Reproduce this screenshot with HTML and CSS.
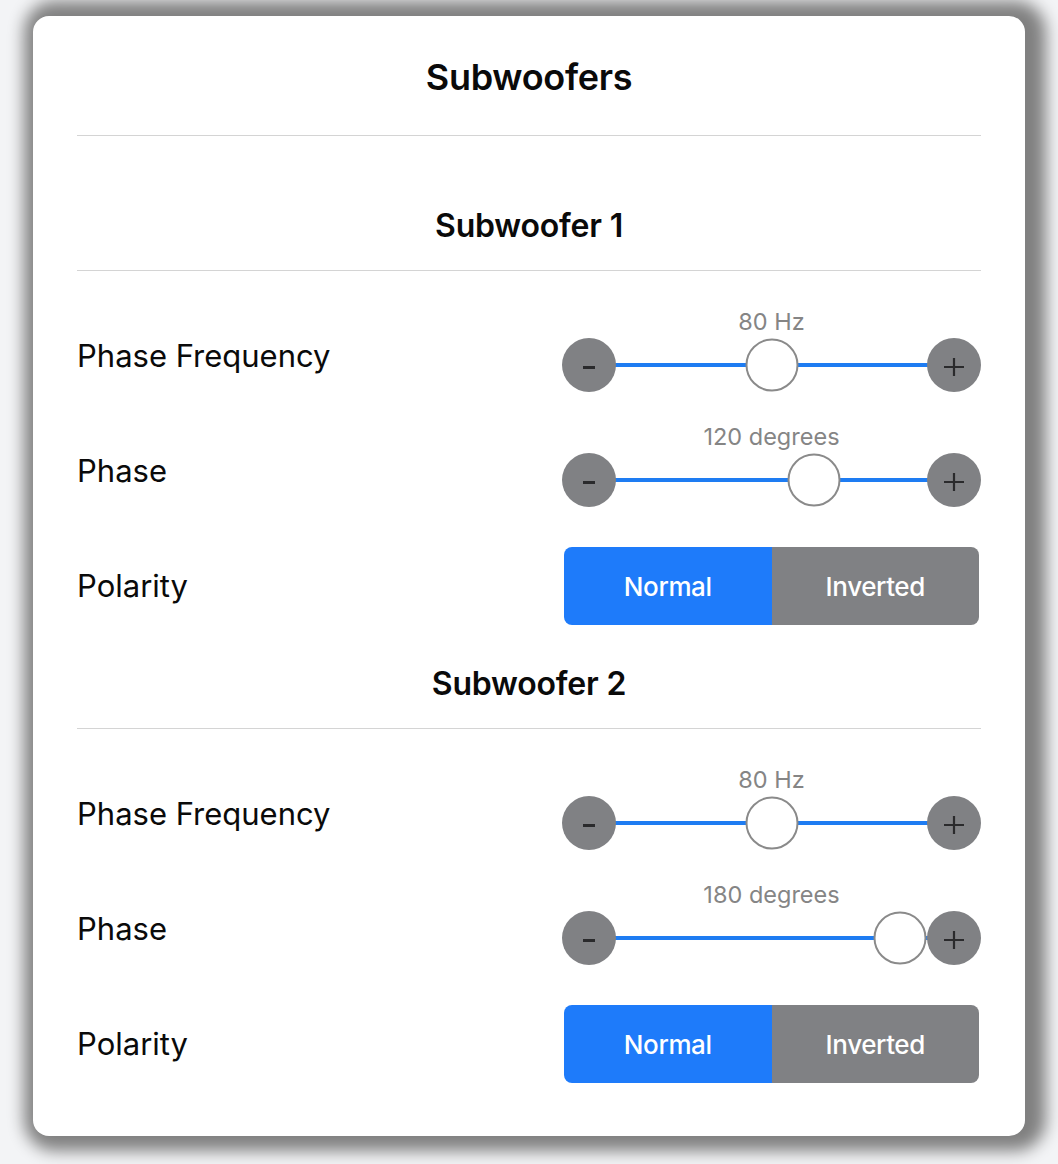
FILE: index.html
```html
<!DOCTYPE html>
<html lang="en">
<head>
<meta charset="utf-8">
<title>Subwoofers</title>
<link rel="stylesheet" href="styles.css">
</head>
<body>
<div class="card">
  <h1 class="title">Subwoofers</h1>

  <section class="section first">
    <h2 class="section-title">Subwoofer 1</h2>
    <div class="row">
      <div class="label">Phase Frequency</div>
      <div class="control">
        <div class="value">80 Hz</div>
        <div class="slider">
          <button class="step" aria-label="decrease"><svg width="14" height="14" viewBox="0 0 14 14"><path d="M1 9.5h12" stroke="#2a2a2c" stroke-width="3"/></svg></button>
          <div class="track"><div class="range"><span class="thumb" style="left:50%"></span></div></div>
          <button class="step" aria-label="increase"><svg width="22" height="22" viewBox="0 0 22 22"><path d="M1 13h20M11 4v18" stroke="#2a2a2c" stroke-width="2.2"/></svg></button>
        </div>
      </div>
    </div>
    <div class="row">
      <div class="label">Phase</div>
      <div class="control">
        <div class="value">120 degrees</div>
        <div class="slider">
          <button class="step" aria-label="decrease"><svg width="14" height="14" viewBox="0 0 14 14"><path d="M1 9.5h12" stroke="#2a2a2c" stroke-width="3"/></svg></button>
          <div class="track"><div class="range"><span class="thumb" style="left:66.67%"></span></div></div>
          <button class="step" aria-label="increase"><svg width="22" height="22" viewBox="0 0 22 22"><path d="M1 13h20M11 4v18" stroke="#2a2a2c" stroke-width="2.2"/></svg></button>
        </div>
      </div>
    </div>
    <div class="row polarity">
      <div class="label">Polarity</div>
      <div class="segmented">
        <button class="seg active">Normal</button>
        <button class="seg">Inverted</button>
      </div>
    </div>
  </section>

  <section class="section">
    <h2 class="section-title">Subwoofer 2</h2>
    <div class="row">
      <div class="label">Phase Frequency</div>
      <div class="control">
        <div class="value">80 Hz</div>
        <div class="slider">
          <button class="step" aria-label="decrease"><svg width="14" height="14" viewBox="0 0 14 14"><path d="M1 9.5h12" stroke="#2a2a2c" stroke-width="3"/></svg></button>
          <div class="track"><div class="range"><span class="thumb" style="left:50%"></span></div></div>
          <button class="step" aria-label="increase"><svg width="22" height="22" viewBox="0 0 22 22"><path d="M1 13h20M11 4v18" stroke="#2a2a2c" stroke-width="2.2"/></svg></button>
        </div>
      </div>
    </div>
    <div class="row">
      <div class="label">Phase</div>
      <div class="control">
        <div class="value">180 degrees</div>
        <div class="slider">
          <button class="step" aria-label="decrease"><svg width="14" height="14" viewBox="0 0 14 14"><path d="M1 9.5h12" stroke="#2a2a2c" stroke-width="3"/></svg></button>
          <div class="track"><div class="range"><span class="thumb" style="left:100%"></span></div></div>
          <button class="step" aria-label="increase"><svg width="22" height="22" viewBox="0 0 22 22"><path d="M1 13h20M11 4v18" stroke="#2a2a2c" stroke-width="2.2"/></svg></button>
        </div>
      </div>
    </div>
    <div class="row polarity">
      <div class="label">Polarity</div>
      <div class="segmented">
        <button class="seg active">Normal</button>
        <button class="seg">Inverted</button>
      </div>
    </div>
  </section>
</div>
</body>
</html>
```

FILE: styles.css
```css
* { box-sizing: border-box; }

html, body {
  margin: 0;
  background: #f3f4f6;
}

body {
  padding: 16px 33px 29px;
  font-family: Inter, "Noto Sans", "Liberation Sans", sans-serif;
  color: #0a0a0a;
}

.card {
  background: #fff;
  border-radius: 16px;
  box-shadow: 6px 0 16px 15px #808080;
  padding: 0 44px 53px;
}

.title {
  margin: 0;
  padding: 39px 0 36px;
  font-size: 36px;
  line-height: 44px;
  font-weight: 600;
  text-align: center;
  border-bottom: 1px solid #d4d4d4;
  letter-spacing: -0.3px;
}

.section { padding-top: 39px; }
.section.first { padding-top: 70px; }

.section-title {
  margin: 0;
  padding-bottom: 24px;
  font-size: 32px;
  line-height: 40px;
  font-weight: 600;
  text-align: center;
  border-bottom: 1px solid #d4d4d4;
  letter-spacing: -0.2px;
}

.row {
  display: grid;
  grid-template-columns: 1fr 419px;
  align-items: center;
  margin-top: 33px;
}

.section-title + .row { margin-top: 39px; }

.row.polarity { margin-top: 40px; }

.label {
  font-size: 31px;
  line-height: 36px;
  padding-top: 10px;
}

.row.polarity .label { padding-top: 0; }

.control {
  display: flex;
  flex-direction: column;
}

.value {
  text-align: center;
  color: #858585;
  font-size: 23.5px;
  line-height: 24px;
  height: 24px;
  margin-bottom: 4px;
}

.slider {
  display: flex;
  align-items: center;
  height: 54px;
}

.step {
  width: 54px;
  height: 54px;
  border-radius: 50%;
  border: none;
  padding: 0;
  background: #808184;
  display: flex;
  align-items: center;
  justify-content: center;
  flex: none;
  position: relative;
  z-index: 1;
}

.track {
  flex: 1;
  height: 4px;
  background: #1e7cf2;
  position: relative;
  margin: 0 -27px;
}

.range {
  position: absolute;
  left: 54px;
  right: 54px;
  top: 50%;
  height: 0;
  z-index: 2;
}

.thumb {
  position: absolute;
  top: 0;
  width: 53px;
  height: 53px;
  border-radius: 50%;
  background: #fff;
  border: 2px solid #8a8a8a;
  transform: translate(-50%, -50%);
}

.segmented {
  display: flex;
  height: 78px;
  margin-left: 2px;
  margin-right: 2px;
  border-radius: 8px;
  overflow: hidden;
}

.seg {
  flex: 1;
  border: none;
  background: #808184;
  color: #fff;
  font-family: inherit;
  font-size: 26px;
  font-weight: 500;
  letter-spacing: -0.4px;
  padding: 0;
}

.seg.active { background: #1e7bfa; }
```
